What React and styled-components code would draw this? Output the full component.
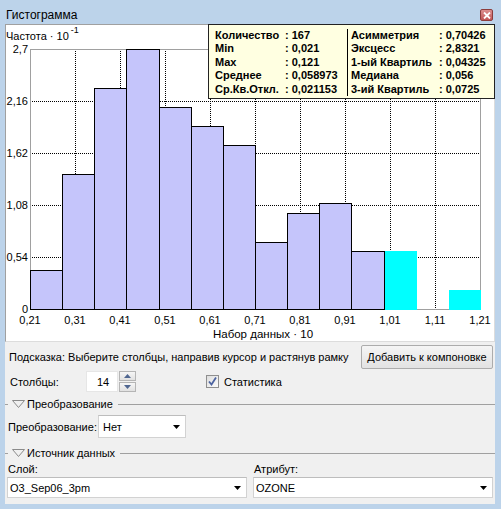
import React from "react";
import styled, { createGlobalStyle } from "styled-components";

const GlobalStyle = createGlobalStyle`
	html, body {
		margin: 0;
		padding: 0;
		background: #bcd3ea;
	}
	body {
		font-family: "Liberation Sans", Arial, sans-serif;
		font-size: 11px;
		color: #000;
	}
	* {
		box-sizing: border-box;
	}
`;

const Window = styled.div`
	width: 501px;
	height: 509px;
	background: #bcd3ea;
	display: flex;
	flex-direction: column;
	padding: 0 6px 5px 5px;
`;

const TitleBar = styled.div`
	height: 24px;
	padding: 6px 2px 0 1px;
	display: flex;
	align-items: center;
	justify-content: space-between;
	font-size: 12px;
`;

const CloseBtn = styled.div`
	width: 13px;
	height: 12px;
	border: 1px solid #8c3d3d;
	border-radius: 2px;
	background: linear-gradient(#dc8f8f, #c05656);
	display: flex;
	align-items: center;
	justify-content: center;
`;

const ChartPanel = styled.div`
	position: relative;
	width: 490px;
	height: 318px;
	background: #fff;
	border-top: 1px solid #a0a0a0;
	border-left: 1px solid #a0a0a0;
	border-right: 1px solid #dcdcdc;
	border-bottom: 1px solid #dcdcdc;

	svg {
		display: block;
	}
`;

const StatsBox = styled.div`
	position: absolute;
	top: -1px;
	left: 202px;
	right: -1px;
	height: 75px;
	background: #ffffe1;
	border: 1px solid #222;
	padding: 4px 0 0 6px;
	display: grid;
	grid-template-columns: 70px 62px 92px auto;
	grid-auto-rows: 13.4px;
	font-weight: bold;
	font-size: 11px;
	line-height: 13.4px;
	white-space: nowrap;
`;

const StatCell = styled.div`
	${(p) =>
		p.$divider &&
		`
		border-left: 1px solid #000;
		padding-left: 3px;
	`}
`;

const ControlPanel = styled.div`
	width: 490px;
	height: 162px;
	background: #f0f0f0;
	padding: 3px 2px 0 4px;
	display: flex;
	flex-direction: column;
	white-space: nowrap;
`;

const HintRow = styled.div`
	height: 24px;
	display: flex;
	align-items: center;
	justify-content: space-between;
`;

const Button = styled.div`
	width: 132px;
	height: 24px;
	border: 1px solid #acacac;
	border-radius: 2px;
	background: linear-gradient(#f5f5f5, #e2e2e2);
	display: flex;
	align-items: center;
	justify-content: center;
`;

const Row = styled.div`
	height: 25px;
	display: flex;
	align-items: center;
`;

const Label = styled.div`
	width: ${(p) => p.$w}px;
	margin-left: ${(p) => p.$ml || 0}px;
`;

const SpinInput = styled.div`
	width: 32px;
	height: 21px;
	background: #fff;
	border: 1px solid #e6e6e6;
	padding-left: 10px;
	display: flex;
	align-items: center;
`;

const SpinButtons = styled.div`
	width: 17px;
	height: 21px;
	margin-left: 1px;
	display: flex;
	flex-direction: column;
	gap: 1px;
`;

const SpinHalf = styled.div`
	flex: 1;
	border: 1px solid #b5b5b5;
	background: linear-gradient(#f6f6f6, #e1e1e1);
	display: flex;
	align-items: center;
	justify-content: center;
`;

const CheckWrap = styled.label`
	margin-left: 70px;
	display: flex;
	align-items: center;
	gap: 5px;
`;

const CheckBox = styled.div`
	width: 13px;
	height: 13px;
	border: 1px solid #8f8f8f;
	background: linear-gradient(135deg, #dedede, #fbfbfb);
	display: flex;
	align-items: center;
	justify-content: center;
`;

const SectionHeader = styled.div`
	height: ${(p) => p.$h}px;
	margin: ${(p) => p.$mt || 0}px -2px 0 -4px;
	display: flex;
	align-items: center;
`;

const SectionDash = styled.div`
	width: 3px;
	height: 1px;
	background: #a0a0a0;
	margin-right: 4px;
`;

const SectionTitle = styled.div`
	display: flex;
	align-items: center;
	gap: 2px;
`;

const SectionLine = styled.div`
	flex: 1;
	height: 1px;
	background: #a0a0a0;
	margin-left: 5px;
`;

const Select = styled.div`
	width: ${(p) => p.$w}px;
	height: ${(p) => p.$h}px;
	background: #fff;
	border: 1px solid #d2d2d2;
	border-top-color: #bdbdbd;
	padding: 0 5px 0 ${(p) => p.$pl}px;
	display: flex;
	align-items: center;
	justify-content: space-between;
`;

const SourceGrid = styled.div`
	margin-left: -2px;
	display: grid;
	grid-template-columns: 240px 240px;
	column-gap: 6px;
`;

const SourceLabel = styled.div`
	height: 14px;
	line-height: 14px;
	padding-left: 1px;
	margin-bottom: 1px;
`;

const Arrow = () => (
	<svg width="7" height="4" viewBox="0 0 7 4">
		<path d="M0 0h7L3.5 4z" fill="#000" />
	</svg>
);

const OutlineTriangle = () => (
	<svg width="13" height="8" viewBox="0 0 13 8">
		<path d="M0.5 0.5h12L6.5 7.5z" fill="none" stroke="#8a8a8a" />
	</svg>
);

const bars = [0.4, 1.4, 2.3, 2.7, 2.1, 1.9, 1.7, 0.7, 1.0, 1.1, 0.6, 0.6, 0, 0.2];
const selected = [11, 12, 13];
const X0 = 30;
const X1 = 480;
const Y0 = 309;
const YTOP = 49;
const yOf = (v) => Math.round(Y0 - (v * (Y0 - YTOP)) / 2.7);
const yTicks = ["0", "0,54", "1,08", "1,62", "2,16", "2,7"];
const xTicks = ["0,21", "0,31", "0,41", "0,51", "0,61", "0,71", "0,81", "0,91", "1,01", "1,11", "1,21"];

function Chart() {
	const bw = (X1 - X0) / bars.length;
	return (
		<svg width="488" height="316" viewBox="6 25 488 316" fontFamily="'Liberation Sans', Arial, sans-serif">
			<text x="6" y="40" fontSize="11">
				Частота · 10
				<tspan dx="2" dy="-7" fontSize="9">
					-1
				</tspan>
			</text>

			{xTicks.map((t, i) =>
				i > 0 && i < xTicks.length - 1 ? (
					<line
						key={"v" + i}
						x1={X0 + i * 45 + 0.5}
						x2={X0 + i * 45 + 0.5}
						y1={YTOP}
						y2={Y0}
						stroke="#000"
						strokeDasharray="1 1"
						shapeRendering="crispEdges"
					/>
				) : null
			)}
			{[0.54, 1.08, 1.62, 2.16].map((v) => (
				<line
					key={"h" + v}
					x1={X0}
					x2={X1}
					y1={yOf(v) + 0.5}
					y2={yOf(v) + 0.5}
					stroke="#000"
					strokeDasharray="1 1"
					shapeRendering="crispEdges"
				/>
			))}
			<rect
				x={X0 + 0.5}
				y={YTOP + 0.5}
				width={X1 - X0}
				height={Y0 - YTOP}
				fill="none"
				stroke="#a0a0a0"
				shapeRendering="crispEdges"
			/>

			{bars.map((v, i) => {
				if (!v) return null;
				const x = Math.round(X0 + i * bw);
				const x2 = Math.round(X0 + (i + 1) * bw);
				const y = yOf(v);
				const sel = selected.includes(i);
				return sel ? (
					<rect key={i} x={x + 1} y={y} width={x2 - x} height={Y0 - y + 1} fill="#00ffff" />
				) : (
					<rect
						key={i}
						x={x + 0.5}
						y={y + 0.5}
						width={x2 - x}
						height={Y0 - y}
						fill="#c5c5fb"
						stroke="#000"
						shapeRendering="crispEdges"
					/>
				);
			})}

			{yTicks.map((t, i) => (
				<text key={t} x="28" y={yOf(i * 0.54) + 4} fontSize="11" textAnchor="end">
					{t}
				</text>
			))}
			{xTicks.map((t, i) => (
				<text key={t} x={X0 + i * 45} y="324" fontSize="11" textAnchor="middle">
					{t}
				</text>
			))}
			<text x="263" y="338" fontSize="11.5" textAnchor="middle">
				Набор данных · 10
			</text>
		</svg>
	);
}

const stats = [
	["Количество", "167", "Асимметрия", "0,70426"],
	["Min", "0,021", "Эксцесс", "2,8321"],
	["Max", "0,121", "1-ый Квартиль", "0,04325"],
	["Среднее", "0,058973", "Медиана", "0,056"],
	["Ср.Кв.Откл.", "0,021153", "3-ий Квартиль", "0,0725"],
];

export default function App() {
	return (
		<>
			<GlobalStyle />
			<Window>
				<TitleBar>
					<span>Гистограмма</span>
					<CloseBtn>
						<svg width="8" height="7" viewBox="0 0 8 7">
							<path d="M1 0.5l6 6M7 0.5l-6 6" stroke="#fff" strokeWidth="1.8" />
						</svg>
					</CloseBtn>
				</TitleBar>

				<ChartPanel>
					<Chart />
					<StatsBox>
						{stats.map((r) => (
							<React.Fragment key={r[0]}>
								<StatCell>{r[0]}</StatCell>
								<StatCell>: {r[1]}</StatCell>
								<StatCell $divider>{r[2]}</StatCell>
								<StatCell>: {r[3]}</StatCell>
							</React.Fragment>
						))}
					</StatsBox>
				</ChartPanel>

				<ControlPanel>
					<HintRow>
						<span>Подсказка: Выберите столбцы, направив курсор и растянув рамку</span>
						<Button>Добавить к компоновке</Button>
					</HintRow>

					<Row>
						<Label $w={76} $ml={1}>Столбцы:</Label>
						<SpinInput>14</SpinInput>
						<SpinButtons>
							<SpinHalf>
								<svg width="7" height="4" viewBox="0 0 7 4">
									<path d="M0 4h7L3.5 0z" fill="#4f6690" />
								</svg>
							</SpinHalf>
							<SpinHalf>
								<svg width="7" height="4" viewBox="0 0 7 4">
									<path d="M0 0h7L3.5 4z" fill="#4f6690" />
								</svg>
							</SpinHalf>
						</SpinButtons>
						<CheckWrap>
							<CheckBox>
								<svg width="9" height="9" viewBox="0 0 9 9">
									<path d="M1 4.5l2.5 3L8 0.5" fill="none" stroke="#4c63a0" strokeWidth="1.8" />
								</svg>
							</CheckBox>
							<span>Статистика</span>
						</CheckWrap>
					</Row>

					<SectionHeader $h={20}>
						<SectionDash />
						<SectionTitle>
							<OutlineTriangle />
							<span>Преобразование</span>
						</SectionTitle>
						<SectionLine />
					</SectionHeader>

					<Row>
						<Label $w={90} $ml={-1}>Преобразование:</Label>
						<Select $w={88} $h={23} $pl={4}>
							<span>Нет</span>
							<Arrow />
						</Select>
					</Row>

					<SectionHeader $h={18} $mt={5}>
						<SectionDash />
						<SectionTitle>
							<OutlineTriangle />
							<span>Источник данных</span>
						</SectionTitle>
						<SectionLine />
					</SectionHeader>

					<SourceGrid>
						<SourceLabel>Слой:</SourceLabel>
						<SourceLabel>Атрибут:</SourceLabel>
						<Select $w={240} $h={21} $pl={2}>
							<span>O3_Sep06_3pm</span>
							<Arrow />
						</Select>
						<Select $w={240} $h={21} $pl={2}>
							<span>OZONE</span>
							<Arrow />
						</Select>
					</SourceGrid>
				</ControlPanel>
			</Window>
		</>
	);
}
